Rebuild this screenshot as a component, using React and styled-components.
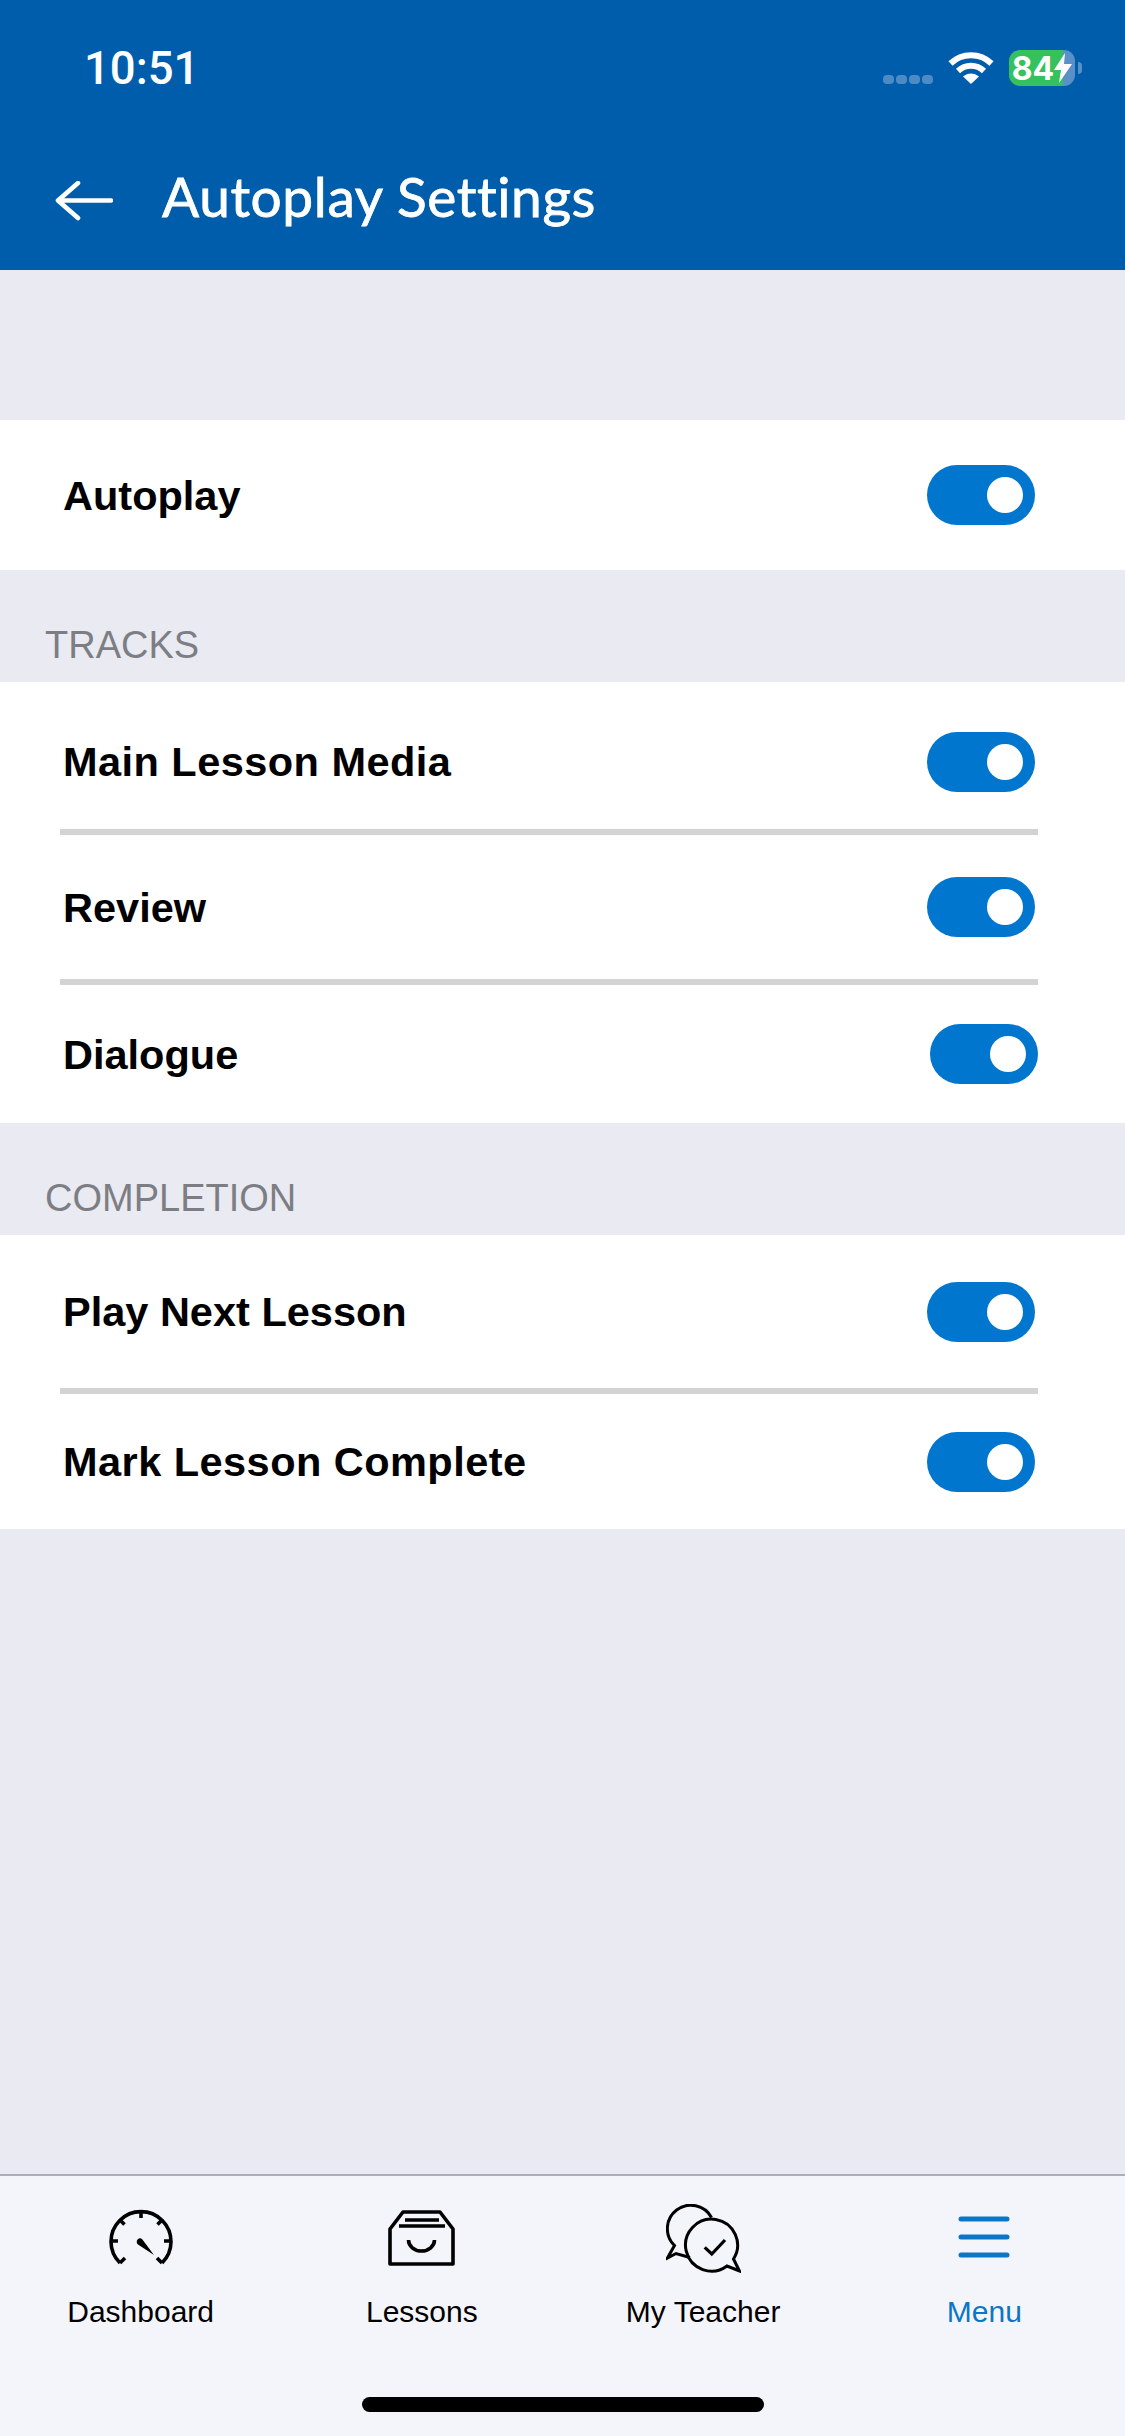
import React from "react";
import styled, { createGlobalStyle } from "styled-components";

const GlobalStyle = createGlobalStyle`
  html, body {
    margin: 0;
    padding: 0;
    background: #e9eaf2;
  }
`;

const DashboardIcon = () => (
  <svg width="64" height="58" viewBox="0 0 64 58" fill="none" stroke="#000" strokeWidth="3.6">
    <path d="M11 54A30 30 0 1 1 53 54" />
    <path d="M32 2V9M11 11L15.5 15.5M53 11L48.5 15.5M2 32H9M55 32H62M11 54L16 49M53 54L48 49" />
    <path d="M28.6 30.6a3.4 3.4 0 0 1 4.6-.4L45 46L29 35.6a3.4 3.4 0 0 1-.4-5Z" fill="#000" stroke="none" />
  </svg>
);

const LessonsIcon = () => (
  <svg width="68" height="56" viewBox="0 0 68 56" fill="none" stroke="#000" strokeWidth="3.6" strokeLinejoin="round">
    <path d="M2 19L15 2H52L65 19V54H2Z" />
    <path d="M17 10H51M11 16H57" />
    <path d="M20.5 30a13 11 0 0 0 26 0" />
  </svg>
);

const TeacherIcon = () => (
  <svg width="75" height="69" viewBox="0 0 75 69" fill="none" stroke="#000" strokeWidth="3">
    <path d="M24 53.5L10 49.5L1.5 54L8.5 41.6A23.5 23.5 0 1 1 45.5 13.5" />
    <path d="M67.5 55L73.5 67L61 62A26 26 0 1 1 67.5 55Z" />
    <path d="M38.7 43.3L45.8 50L59 36" strokeWidth="3.2" />
  </svg>
);

const MenuIcon = () => (
  <svg width="52" height="46" viewBox="0 0 52 46" fill="none" stroke="#0a76c8" strokeWidth="5" strokeLinecap="round">
    <path d="M3 4H49M3 22H49M3 40H49" />
  </svg>
);

const BackIcon = () => (
  <svg width="58" height="40" viewBox="0 0 58 40" fill="none" stroke="#fff" strokeWidth="4.6" strokeLinecap="round" strokeLinejoin="round">
    <path d="M56 19.5H3M23 2L3 19.5L23 37" />
  </svg>
);

const WifiIcon = () => (
  <svg width="46" height="33" viewBox="0 0 46 33" fill="none" stroke="#fff" strokeWidth="6">
    <path d="M2.5 12.5C14 1.5 32 1.5 43.5 12.5" />
    <path d="M10 20C17.5 13 28.5 13 36 20" />
    <path d="M15 25.5L23 33L31 25.5C26 21.5 20 21.5 15 25.5Z" fill="#fff" stroke="none" />
  </svg>
);

const BoltIcon = () => (
  <svg width="18" height="30" viewBox="0 0 18 30" fill="#fff">
    <path d="M11 0L0 17H7L5 30L18 11H10Z" />
  </svg>
);

const tabs = [
  { label: "Dashboard", icon: <DashboardIcon /> },
  { label: "Lessons", icon: <LessonsIcon /> },
  { label: "My Teacher", icon: <TeacherIcon /> },
  { label: "Menu", icon: <MenuIcon />, active: true },
];

const App = () => {
  return (
    <Page>
      <GlobalStyle />
      <Header>
        <StatusBar>
          <Time>10:51</Time>
          <StatusIcons>
            <SignalDots>
              <Dot />
              <Dot />
              <Dot />
              <Dot />
            </SignalDots>
            <WifiIcon />
            <Battery>
              <BatteryBody>
                84
                <BoltIcon />
              </BatteryBody>
              <BatteryNub />
            </Battery>
          </StatusIcons>
        </StatusBar>
        <TitleBar>
          <BackButton>
            <BackIcon />
          </BackButton>
          <Title>Autoplay Settings</Title>
        </TitleBar>
      </Header>

      <Main>
        <Card $top={150}>
          <Row $height={150}>
            <Label $drop={2}>Autoplay</Label>
            <Toggle />
          </Row>
        </Card>

        <SectionTitle>TRACKS</SectionTitle>
        <Card>
          <Row $height={147} $pushDown={12}>
            <Label $spread={0.46}>Main Lesson Media</Label>
            <Toggle />
          </Row>
          <Divider />
          <Row $height={144}>
            <Label $drop={2}>Review</Label>
            <Toggle />
          </Row>
          <Divider />
          <Row $height={138}>
            <Label $drop={2}>Dialogue</Label>
            <Toggle $nudge={3} />
          </Row>
        </Card>

        <SectionTitle>COMPLETION</SectionTitle>
        <Card>
          <Row $height={153}>
            <Label>Play Next Lesson</Label>
            <Toggle />
          </Row>
          <Divider />
          <Row $height={135}>
            <Label $spread={0.46}>Mark Lesson Complete</Label>
            <Toggle />
          </Row>
        </Card>
      </Main>

      <TabBar>
        <Tabs>
          {tabs.map((tab) => (
            <Tab key={tab.label}>
              <TabIcon>{tab.icon}</TabIcon>
              <TabLabel $active={tab.active}>{tab.label}</TabLabel>
            </Tab>
          ))}
        </Tabs>
        <HomeIndicator />
      </TabBar>
    </Page>
  );
};

export default App;

const Page = styled.div`
  width: 1125px;
  min-height: 2436px;
  display: flex;
  flex-direction: column;
  background: #e9eaf2;
  font-family: "Liberation Sans", Arial, sans-serif;
`;

const Header = styled.header`
  height: 270px;
  box-sizing: border-box;
  background: #005dac;
  color: #fff;
`;

const StatusBar = styled.div`
  height: 138px;
  box-sizing: border-box;
  padding: 43px 43px 0 84px;
  display: flex;
  justify-content: space-between;
  align-items: flex-start;
`;

const Time = styled.span`
  font-family: Roboto, sans-serif;
  font-weight: 500;
  font-size: 45.5px;
  line-height: 52px;
`;

const StatusIcons = styled.div`
  display: flex;
  align-items: flex-start;
  padding-top: 8px;
`;

const SignalDots = styled.div`
  display: flex;
  gap: 1.5px;
  margin: 24px 15px 0 0;
`;

const Dot = styled.span`
  width: 11.5px;
  height: 9px;
  border-radius: 4px;
  background: #4d8bc6;
`;

const Battery = styled.div`
  display: flex;
  align-items: center;
  margin-left: 15px;
  margin-top: -1px;
`;

const BatteryBody = styled.div`
  width: 66px;
  height: 36px;
  border-radius: 11px;
  background: linear-gradient(to right, #35c15d 82%, #5a90c8 82%);
  display: flex;
  align-items: center;
  justify-content: center;
  font-family: Inter, sans-serif;
  font-weight: 700;
  font-size: 32px;
  color: #fff;
`;

const BatteryNub = styled.span`
  width: 4px;
  height: 12px;
  margin-left: 3px;
  border-radius: 0 6px 6px 0;
  background: #5a90c8;
`;

const TitleBar = styled.div`
  display: flex;
  align-items: center;
  padding-left: 55px;
  height: 100px;
  margin-top: 8px;
`;

const BackButton = styled.span`
  display: flex;
  margin-top: 10px;
`;

const Title = styled.h1`
  margin: 0 0 0 49px;
  font-family: Lato, sans-serif;
  font-weight: 400;
  font-size: 55px;
  letter-spacing: 0.6px;
  line-height: 64px;
  -webkit-text-stroke: 0.8px #fff;
`;

const Main = styled.main`
  flex: 1;
`;

const Card = styled.section`
  background: #fff;
  margin-top: ${(p) => p.$top || 0}px;
`;

const Row = styled.div`
  height: ${(p) => p.$height}px;
  box-sizing: border-box;
  padding: ${(p) => p.$pushDown || 0}px 90px 0 63px;
  display: flex;
  align-items: center;
  justify-content: space-between;
`;

const Label = styled.span`
  margin-top: ${(p) => p.$drop || 0}px;
  font-weight: 700;
  font-size: 41.5px;
  letter-spacing: ${(p) => p.$spread || 0}px;
  color: #000;
`;

const Toggle = styled.span`
  width: 108px;
  height: 60px;
  box-sizing: border-box;
  padding-right: 12px;
  border-radius: 30px;
  background: #0076ce;
  display: flex;
  align-items: center;
  justify-content: flex-end;
  margin-right: ${(p) => -(p.$nudge || 0)}px;

  &::after {
    content: "";
    width: 36px;
    height: 36px;
    border-radius: 50%;
    background: #fff;
  }
`;

const Divider = styled.div`
  height: 6px;
  margin: 0 87px 0 60px;
  background: #d3d3d3;
`;

const SectionTitle = styled.h2`
  height: 112px;
  box-sizing: border-box;
  margin: 0;
  padding: 0 0 15px 45px;
  display: flex;
  align-items: flex-end;
  font-weight: 400;
  font-size: 38px;
  line-height: 44px;
  color: #7d7e84;
`;

const TabBar = styled.nav`
  height: 262px;
  box-sizing: border-box;
  border-top: 2px solid #adaeb4;
  background: #f4f5fa;
  display: flex;
  flex-direction: column;
  align-items: center;
`;

const Tabs = styled.div`
  width: 100%;
  padding-top: 28px;
  display: grid;
  grid-template-columns: repeat(4, 1fr);
`;

const Tab = styled.div`
  display: flex;
  flex-direction: column;
  align-items: center;
`;

const TabIcon = styled.div`
  height: 68px;
  display: flex;
  align-items: center;
  justify-content: center;
`;

const TabLabel = styled.span`
  margin-top: 22px;
  font-size: 30px;
  line-height: 36px;
  color: ${(p) => (p.$active ? "#0a76c8" : "#000")};
`;

const HomeIndicator = styled.div`
  width: 402px;
  height: 15px;
  margin-top: 67px;
  border-radius: 8px;
  background: #000;
`;
